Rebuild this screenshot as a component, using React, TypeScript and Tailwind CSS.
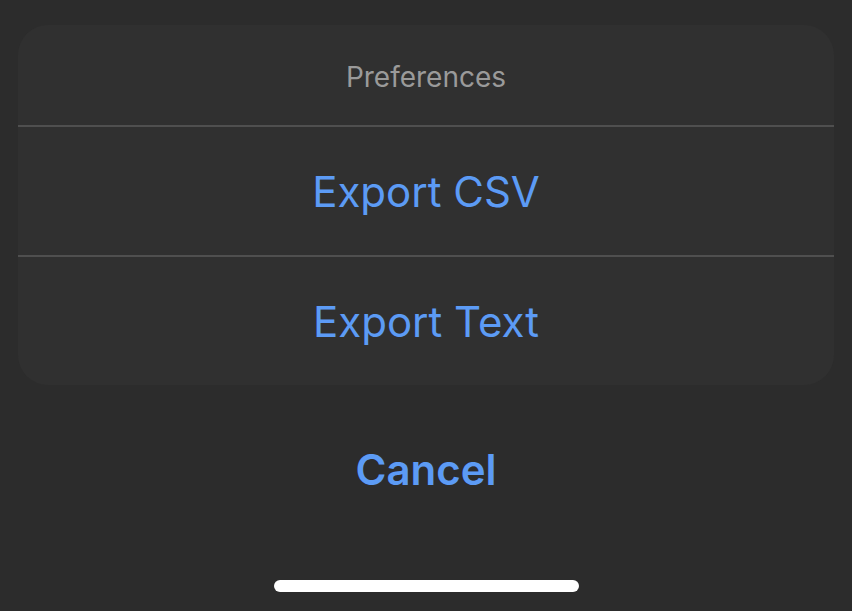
import React from "react";

const actions = ["Export CSV", "Export Text"];

const App = () => {
  return (
    <div
      className="w-[852px] h-[611px] bg-[#2c2c2c] flex flex-col px-[18px] pt-[25px]"
      style={{ fontFamily: "Inter, 'Noto Sans', sans-serif" }}
    >
      {/* action sheet */}
      <div className="bg-[#303030] rounded-[30px] flex flex-col">
        <div className="h-[100px] flex items-center justify-center text-[28px] text-[#9a9a9a] pt-[3px]">
          Preferences
        </div>
        {actions.map((label) => (
          <button
            key={label}
            className="h-[130px] border-t-2 border-[#4f4f4f] flex items-center justify-center text-[42px] text-[#5c9bf5]"
          >
            {label}
          </button>
        ))}
      </div>

      <button className="mt-[38px] h-[92px] flex items-center justify-center text-[42px] font-semibold text-[#5c9bf5]">
        Cancel
      </button>

      <div className="mt-[65px] flex justify-center">
        <div className="w-[305px] h-[12px] rounded-full bg-white" />
      </div>
    </div>
  );
};

export default App;
